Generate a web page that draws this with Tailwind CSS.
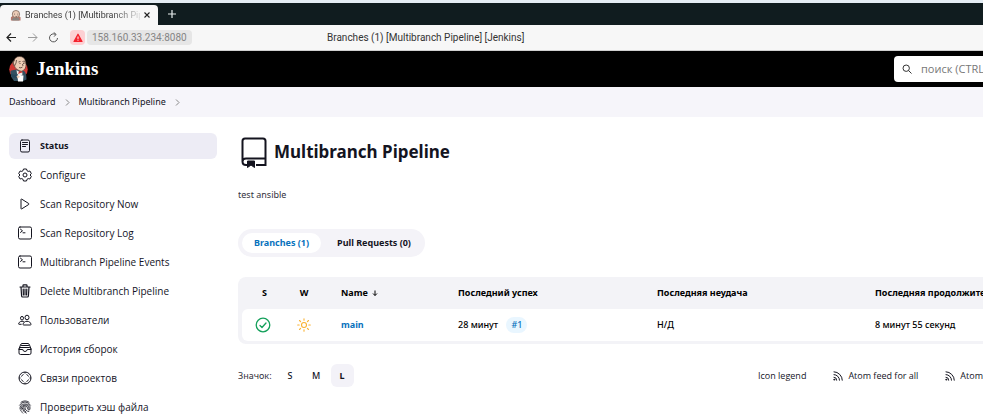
<!DOCTYPE html>
<html lang="ru">
<head>
<meta charset="utf-8">
<title>Branches (1) [Multibranch Pipeline] [Jenkins]</title>
<script src="https://cdn.jsdelivr.net/npm/@tailwindcss/browser@4"></script>
</head>
<body class="min-h-screen overflow-x-hidden bg-white font-['Open_Sans','Noto_Sans',sans-serif] text-[10px] leading-4 text-[#14141f]">

<!-- Browser window -->
<div class="border-t-3 border-[#e4edf4] bg-[#101c1f] font-['Roboto',sans-serif]">
  <div class="flex h-[22px] items-end">
    <div class="flex h-5 w-[158px] items-center gap-1 rounded-t-sm bg-[#f7f7f7] pr-2 pl-[10px]">
      <svg class="size-[11px] shrink-0" viewBox="0 0 24 24"><path d="M2 16l5-4 12 1 4 3v7H2z" fill="#b8776b"/><path d="M4 19l7-3 9 2v5H5z" fill="#8b8580"/><ellipse cx="13" cy="9" rx="8" ry="8" fill="#eccdb8" stroke="#6b554b" stroke-width="1.500"/><path d="M9 9h2m5 0h2m-6 5q3 1 4-1" fill="none" stroke="#433" stroke-width="1.500"/></svg>
      <span class="flex-1 overflow-hidden bg-linear-to-r from-[#333] from-75% to-[#ddd] bg-clip-text text-[9px] whitespace-nowrap text-transparent">Branches (1) [Multibranch Pip</span>
      <button aria-label="Close tab"><svg class="size-[6px]" viewBox="0 0 6 6"><path d="M.5.5l5 5m0-5l-5 5" stroke="#222" stroke-width="1.1"/></svg></button>
    </div>
    <button class="ml-[10px] flex h-[22px] items-center" aria-label="New tab"><svg class="size-2" viewBox="0 0 8 8"><path d="M4 0v8M0 4h8" stroke="#e8eeee" stroke-width="1.2"/></svg></button>
  </div>
  <div class="grid h-[26px] grid-cols-[327px_1fr] items-center border-b border-[#d0d0d0] bg-[#f7f7f7]">
    <div class="flex items-center gap-[10px] pl-[6px]">
      <button aria-label="Back"><svg class="size-[11px]" viewBox="0 0 11 11" fill="none" stroke="#222" stroke-width="1.2"><path d="M10 5.5H1M5 1.500L1 5.500l4 4"/></svg></button>
      <button aria-label="Forward"><svg class="size-[11px]" viewBox="0 0 11 11" fill="none" stroke="#9b9b9b" stroke-width="1"><path d="M1 5.500h9M6 1.500l4 4-4 4"/></svg></button>
      <button aria-label="Reload"><svg class="size-[11px]" viewBox="0 0 11 11" fill="none" stroke="#555" stroke-width="1"><path d="M9.500 6A4 4 0 1 1 7.500 2.400M5.700.4l2.400 2-2 2.200"/></svg></button>
      <div class="ml-[1px] flex items-center gap-[2px]">
        <span class="flex size-[15px] items-center justify-center rounded-sm bg-[#fdd0d3]"><svg class="size-[10px]" viewBox="0 0 10 10"><path d="M5 1.200L9 8.500H1z" fill="#f5222d" stroke="#f5222d" stroke-width="1.200" stroke-linejoin="round"/><path d="M5 3.500v2.400m0 .8v1" stroke="#fff" stroke-width="1"/></svg></span>
        <span class="rounded-sm bg-[#e6e6e6] px-[5px] leading-[15px] text-[#858585]">158.160.33.234:8080</span>
      </div>
    </div>
    <span class="whitespace-nowrap text-[#333]">Branches (1) [Multibranch Pipeline] [Jenkins]</span>
  </div>
</div>

<header class="flex h-9 items-center justify-between overflow-hidden bg-black pl-[9px]">
  <a href="#" class="flex items-center gap-2 text-white">
    <svg class="h-[26px] w-[19px]" viewBox="0 0 38 52">
      <circle cx="19" cy="27" r="18.500" fill="#d33833"/>
      <path d="M4 36q-3-5 1-7l9-2 16 3q5 3 5 17l-7 3H10l-6-9z" fill="#335061"/>
      <path d="M15 28l6 4 5-2 1 7-6 4-5-6z" fill="#f0eeea"/>
      <path d="M20 31l5-3 2 5-4 1-5 2z" fill="#d33833"/>
      <path d="M10 10Q12 1 21 1q10 0 12 10 3 11-3 17-5 5-12 0-7-3-8-11-3-3 0-7z" fill="#edcdb5" stroke="#49342e" stroke-width="1.200"/>
      <path d="M11 9q-5 1-3 7l3 4 3-6 1-6M30 9q3 3 2 7" fill="none" stroke="#755e50" stroke-width="2"/>
      <path d="M19 12l4-1m4 0l3 1m-9 3h2m5 0h2m-3 1l1 4m-8 3q4 2 7-1" fill="none" stroke="#36231f" stroke-width="1.400"/>
      <path d="M17 38l12 1-1 12H18z" fill="#fff"/>
      <path d="M3 36l13 2 2 6-11-1z" fill="#26465a"/><path d="M15 40l5-1 2 3-5 3z" fill="#edcdb5"/>
    </svg>
    <span class="font-['Liberation_Serif',serif] text-[19px] leading-6 font-bold">Jenkins</span>
  </a>
  <label class="-mr-10 flex h-[26px] w-[129px] items-center gap-[9px] rounded-sm bg-white pl-2">
    <svg class="size-[10px] shrink-0" viewBox="0 0 10 10" fill="none" stroke="#333" stroke-width="1"><circle cx="4.200" cy="4.200" r="3.200"/><path d="M6.500 6.500l3 3"/></svg>
    <input type="search" aria-label="поиск" placeholder="поиск (CTRL+K)" class="w-full text-[11px] outline-none placeholder:text-[#777]">
  </label>
</header>

<nav class="flex h-[30px] items-center gap-[9px] bg-[#f6f5fa] pl-[9px] font-['Noto_Sans',sans-serif] text-[9px]" aria-label="Breadcrumb">
  <a href="#">Dashboard</a>
  <svg class="h-[7px] w-[5px]" viewBox="0 0 5 7" fill="none" stroke="#888" stroke-width="1"><path d="M1 .5l3 3-3 3"/></svg>
  <a href="#">Multibranch Pipeline</a>
  <svg class="h-[7px] w-[5px]" viewBox="0 0 5 7" fill="none" stroke="#888" stroke-width="1"><path d="M1 .5l3 3-3 3"/></svg>
</nav>

<div class="flex gap-[21px] pt-4 pl-[9px]">
  <aside class="w-52 shrink-0">
    <nav class="-mb-1 flex flex-col gap-[3px] *:flex *:h-[26px] *:items-center *:gap-2 *:rounded-md *:pl-[9px]" aria-label="Tasks">
      <a href="#" class="bg-[#edecf5] font-['Noto_Sans',sans-serif] text-[9px] font-bold">
        <svg class="size-[14px]" viewBox="0 0 14 14" fill="none" stroke="currentColor" stroke-width="1" stroke-linecap="round"><rect x="2.500" y="1" width="9" height="12" rx="1.500"/><path d="M4.500 3.500h5M4.500 5.500h5M4.500 7.500h3"/></svg>Status</a>
      <a href="#">
        <svg class="size-[14px]" viewBox="0 0 14 14" fill="none" stroke="currentColor" stroke-width="1" stroke-linejoin="round"><path d="M5.500 1h3l.5 1.700 1.200.7 1.700-.4 1.400 2.500L12.100 7l1.200 1.500-1.400 2.500-1.700-.4-1.200.7-.5 1.700h-3L5 11.300l-1.200-.7-1.700.4L.7 8.500 1.900 7 .7 5.500 2.100 3l1.700.4L5 2.700z"/><circle cx="7" cy="7" r="2"/></svg>Configure</a>
      <a href="#">
        <svg class="size-[14px]" viewBox="0 0 14 14" fill="none" stroke="currentColor" stroke-width="1" stroke-linejoin="round"><path d="M3 2.500v9q0 .7.700.4l7-4.400q.6-.5 0-1L3.700 2.100Q3 1.800 3 2.500z"/></svg>Scan Repository Now</a>
      <a href="#">
        <svg class="size-[14px]" viewBox="0 0 14 14" fill="none" stroke="currentColor" stroke-width="1" stroke-linecap="round"><rect x=".5" y="1" width="13" height="12" rx="1.500"/><path d="M2.500 3.200l2 1.600-2 1.600M5 6.800h2"/></svg>Scan Repository Log</a>
      <a href="#">
        <svg class="size-[14px]" viewBox="0 0 14 14" fill="none" stroke="currentColor" stroke-width="1" stroke-linecap="round"><rect x=".5" y="1" width="13" height="12" rx="1.500"/><path d="M2.500 3.200l2 1.600-2 1.600M5 6.800h2"/></svg>Multibranch Pipeline Events</a>
      <a href="#">
        <svg class="size-[14px]" viewBox="0 0 14 14" fill="none" stroke="currentColor" stroke-width="1.200" stroke-linecap="round"><path d="M2 3h10M5 3V1.500q0-.7.700-.7h2.600q.7 0 .7.700V3M3 3l.6 9q.1 1 1 1h4.800q.9 0 1-1L11 3M5.200 5l.2 6M7 5v6M8.800 5l-.2 6"/></svg>Delete Multibranch Pipeline</a>
      <a href="#">
        <svg class="size-[14px]" viewBox="0 0 14 14" fill="none" stroke="currentColor" stroke-width="1" stroke-linejoin="round"><ellipse cx="9" cy="4.500" rx="2" ry="2.300"/><path d="M9 8.300c-2.200 0-3.700 1.200-4 3.100 0 .4.200.6.600.6h6.800c.4 0 .6-.2.600-.6-.3-1.900-1.800-3.100-4-3.100z"/><ellipse cx="4" cy="5.200" rx="1.500" ry="1.800"/><path d="M5.800 8.500C3.300 7.700 1 8.800.6 10.800q0 .5.500.5h2.500"/></svg>Пользователи</a>
      <a href="#">
        <svg class="size-[14px]" viewBox="0 0 14 14" fill="none" stroke="currentColor" stroke-width="1" stroke-linecap="round"><rect x="1" y="5.500" width="12" height="7" rx="1.500"/><path d="M1.200 6.300L2.500 3Q3 1.500 4 1.500h6Q11 1.500 11.500 3l1.300 3.300M3.500 3.500h7M3 5.500h8M1 7.500h3.800Q5 9.500 7 9.500t2.200-2H13"/></svg>История сборок</a>
      <a href="#">
        <svg class="size-[14px]" viewBox="0 0 14 14" fill="none" stroke="currentColor" stroke-width="1"><circle cx="7" cy="7" r="6"/><path d="M3.500 5.500q.5-1.500 2-2M8.500 3.500q1.500.5 2 2M10.500 8.500q-.5 1.500-2 2M5.500 10.500q-1.500-.5-2-2M7 1v1.500M7 11.500V13M1 7h1.500M11.500 7H13"/></svg>Связи проектов</a>
      <a href="#">
        <svg class="size-[14px]" viewBox="0 0 14 14" fill="none" stroke="currentColor" stroke-width=".8" stroke-linecap="round"><path d="M3 2.200Q7-.6 11 2.200M1.500 5.200Q3.500 2 7 2t5.500 3.200M2 9q-.5-5 5-5t5 4.500q0 1.500-1 1.500-1.300 0-1.500-2Q9.400 6 7 6T4.500 8.500M2.800 10.800Q3.500 10 3.200 8q0-2.500 3.800-2.900t4 3.400M4.500 8.500q.3 3.500 3.800 4.700M7 7.500q0 3.700 3.800 4M5.800 8q-.2 3 2 4M4.800 13.200q-.8-.6-1.100-1.700"/></svg>Проверить хэш файла</a>
    </nav>
  </aside>

  <main class="min-w-0 flex-1 overflow-x-hidden">
    <div class="flex h-[38px] items-center gap-[5px]">
      <svg class="size-[31px]" viewBox="0 0 31 31" fill="none" stroke="currentColor" stroke-width="2"><path d="M9 28H8q-3.500 0-3.500-3.500V4Q4.500 1.500 7 1.500h18Q27.500 1.500 27.500 4v24H18M4.500 24.500Q4.500 21.500 8 21.500h19.500"/><path d="M9.500 24h7v6.500l-3.500-2.500-3.500 2.500z" fill="currentColor" stroke-width="1"/></svg>
      <h1 class="font-['Noto_Sans',sans-serif] text-[17px] leading-6 font-bold">Multibranch Pipeline</h1>
    </div>
    <p class="mt-4 font-['Noto_Sans',sans-serif] text-[9px] text-[#333340]">test ansible</p>

    <div class="mt-[26px] inline-flex h-7 items-center rounded-full bg-[#f4f3f8] p-1 font-['Noto_Sans',sans-serif] text-[9px] font-bold">
      <a href="#" class="rounded-full bg-white px-3 leading-5 text-[#0872bd]">Branches (1)</a>
      <a href="#" class="rounded-full pr-[10px] pl-4 leading-5">Pull Requests (0)</a>
    </div>

    <div class="mt-5 w-[880px] rounded-lg bg-[#f3f3f7] px-1 pb-[3px]">
      <table class="w-full table-fixed border-collapse text-left font-['Noto_Sans',sans-serif] text-[9px] text-black">
        <colgroup><col class="w-[41px]"><col class="w-[42px]"><col class="w-[133px]"><col class="w-[199px]"><col class="w-[218px]"><col></colgroup>
        <thead>
          <tr class="h-8">
            <th class="pl-1 text-center">S</th><th class="text-center">W</th>
            <th class="pl-4"><button class="flex items-center gap-1 font-bold">Name <svg class="h-[7px] w-[6px]" viewBox="0 0 6 7" fill="none" stroke="currentColor"><path d="M3 .5v5M1 3.500l2 2 2-2"/></svg></button></th>
            <th>Последний успех</th><th>Последняя неудача</th><th>Последняя продолжительность</th>
          </tr>
        </thead>
        <tbody class="font-medium">
          <tr class="h-8 *:bg-white">
            <td class="rounded-l-md"><svg class="mx-auto size-4" viewBox="0 0 16 16" fill="none" stroke="#14a05b" stroke-width="1.300" stroke-linecap="round" stroke-linejoin="round" role="img" aria-label="Success"><circle cx="8" cy="8" r="6.800"/><path d="M5 8.500l2 2 4-4.500"/></svg></td>
            <td><svg class="mx-auto size-[14px]" viewBox="0 0 14 14" fill="none" stroke="#f9b233" stroke-width="1.100" stroke-linecap="round" role="img" aria-label="Sunny"><circle cx="7" cy="7" r="2.500"/><path d="M7 .7v1.500M7 11.800v1.500M.7 7h1.500M11.800 7h1.500M2.500 2.500l1.100 1.100M10.400 10.400l1.100 1.100M2.500 11.500l1.100-1.100M10.400 3.600l1.100-1.100"/></svg></td>
            <td class="pl-4"><a href="#" class="font-bold text-[#0872bd]">main</a></td>
            <td>28 минут <a href="#" class="ml-[6px] inline-block rounded-full bg-[#e9f6ff] px-[5px] text-[#0872bd]">#1</a></td>
            <td>Н/Д</td>
            <td class="rounded-r-md">8 минут 55 секунд</td>
          </tr>
        </tbody>
      </table>
    </div>

    <div class="mt-5 flex w-[880px] items-center justify-between text-[9px]">
      <div class="flex items-center gap-[3px] font-['Noto_Sans',sans-serif]">
        <span class="mr-1 text-[#333340]">Значок:</span>
        <button class="size-[23px] rounded-md font-medium">S</button>
        <button class="size-[23px] rounded-md font-medium">M</button>
        <button class="size-[23px] rounded-md bg-[#f3f2f8] font-bold">L</button>
      </div>
      <div class="flex w-[360px] items-center gap-[27px] whitespace-nowrap">
        <a href="#">Icon legend</a>
        <a href="#" class="flex items-center gap-[5px]"><svg class="size-[10px]" viewBox="0 0 10 10" fill="none" stroke="currentColor" stroke-width="1" stroke-linecap="round"><path d="M1 .8a8.500 8.500 0 0 1 8.300 8.400M1 3.600a5.500 5.500 0 0 1 5.500 5.600M1 6.300a2.700 2.700 0 0 1 2.700 2.900"/><circle cx="1.200" cy="8.700" r=".5"/></svg>Atom feed for all</a>
        <a href="#" class="flex items-center gap-[5px]"><svg class="size-[10px]" viewBox="0 0 10 10" fill="none" stroke="currentColor" stroke-width="1" stroke-linecap="round"><path d="M1 .8a8.500 8.500 0 0 1 8.300 8.400M1 3.600a5.500 5.500 0 0 1 5.500 5.600M1 6.300a2.700 2.700 0 0 1 2.700 2.900"/><circle cx="1.200" cy="8.700" r=".5"/></svg>Atom feed for failures</a>
      </div>
    </div>
  </main>
</div>
</body>
</html>
